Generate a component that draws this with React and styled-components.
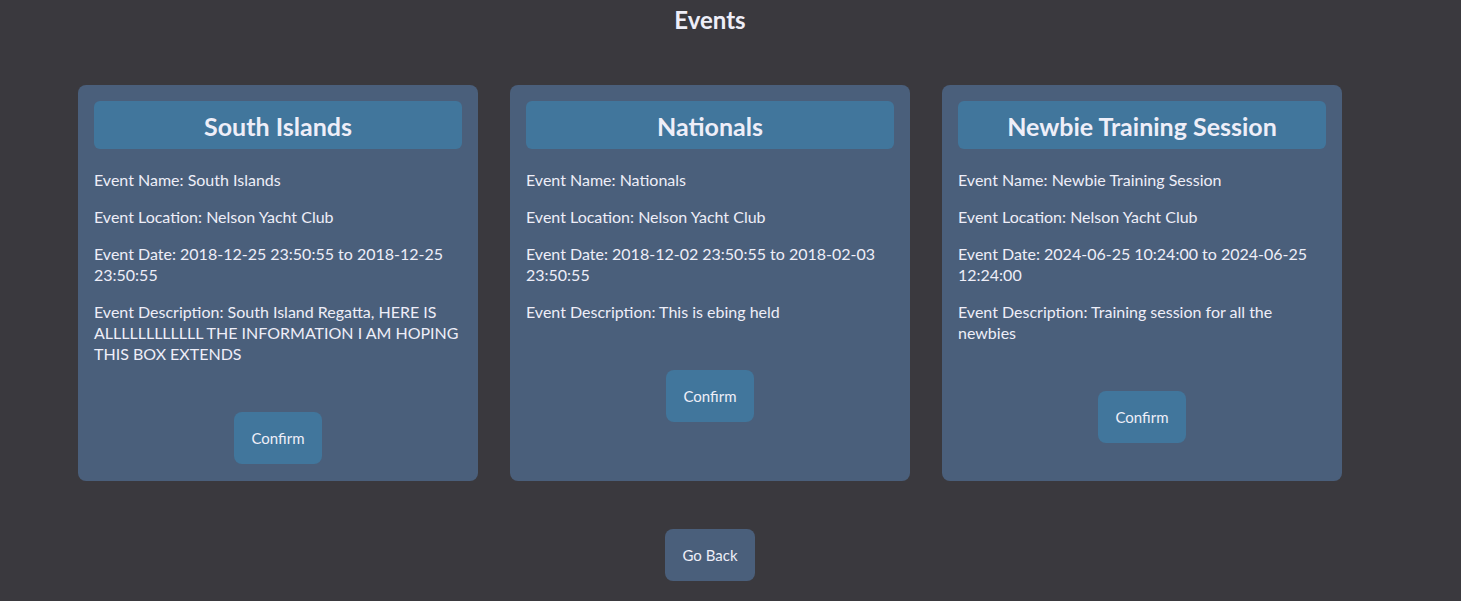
import React from "react";
import styled, { createGlobalStyle } from "styled-components";

const events = [
  {
    name: "South Islands",
    location: "Nelson Yacht Club",
    start: "2018-12-25 23:50:55",
    end: "2018-12-25 23:50:55",
    description:
      "South Island Regatta, HERE IS ALLLLLLLLLLLL THE INFORMATION I AM HOPING THIS BOX EXTENDS",
  },
  {
    name: "Nationals",
    location: "Nelson Yacht Club",
    start: "2018-12-02 23:50:55",
    end: "2018-02-03 23:50:55",
    description: "This is ebing held",
  },
  {
    name: "Newbie Training Session",
    location: "Nelson Yacht Club",
    start: "2024-06-25 10:24:00",
    end: "2024-06-25 12:24:00",
    description: "Training session for all the newbies",
  },
];

const App = () => {
  return (
    <>
      <GlobalStyle />
      <Page>
        <Title>Events</Title>
        <CardRow>
          {events.map((event) => (
            <Card key={event.name}>
              <CardHeader>{event.name}</CardHeader>
              <Detail>Event Name: {event.name}</Detail>
              <Detail>Event Location: {event.location}</Detail>
              <Detail>
                Event Date: {event.start} to {event.end}
              </Detail>
              <Detail>Event Description: {event.description}</Detail>
              <Button $accent>Confirm</Button>
            </Card>
          ))}
        </CardRow>
        <Button>Go Back</Button>
      </Page>
    </>
  );
};

export default App;

const GlobalStyle = createGlobalStyle`
  html, body {
    margin: 0;
    background: #3a393e;
  }
  body {
    font-family: Lato, "Open Sans", sans-serif;
    color: #eeeef8;
  }
`;

const Page = styled.div`
  width: 1420px;
  min-height: 601px;
  display: flex;
  flex-direction: column;
  align-items: center;
  box-sizing: border-box;
  padding-top: 5px;
`;

const Title = styled.h1`
  margin: 0;
  font-size: 24px;
  line-height: 30px;
  font-weight: 700;
`;

const CardRow = styled.div`
  display: flex;
  gap: 32px;
  margin-top: 50px;
  align-items: stretch;
`;

const Card = styled.div`
  width: 400px;
  box-sizing: border-box;
  padding: 16px 16px 17px;
  background: #4a5f7b;
  border-radius: 8px;
  display: flex;
  flex-direction: column;
  align-items: stretch;
`;

const CardHeader = styled.h2`
  margin: 0 0 20px;
  height: 48px;
  display: flex;
  align-items: center;
  justify-content: center;
  padding-top: 2px;
  box-sizing: border-box;
  background: #41769c;
  border-radius: 6px;
  font-size: 25px;
  font-weight: 700;
`;

const Detail = styled.p`
  margin: 0 0 16px;
  font-size: 16px;
  line-height: 21px;
`;

const Button = styled.button`
  align-self: center;
  margin-top: ${(p) => (p.$accent ? "32px" : "48px")};
  height: 52px;
  padding: 0 17px;
  border: none;
  border-radius: 8px;
  background: ${(p) => (p.$accent ? "#41769c" : "#4a5f7b")};
  color: #eeeef8;
  font-family: inherit;
  font-size: 15px;
  cursor: pointer;
`;
